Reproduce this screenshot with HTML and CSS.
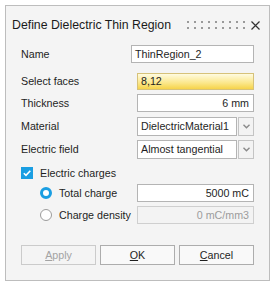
FILE: index.html
```html
<!DOCTYPE html>
<html lang="en">
<head>
  <meta charset="UTF-8" />
  <title>Define Dielectric Thin Region</title>
  <link rel="stylesheet" href="styles.css">
</head>
<body>
  <div class="dialog">
    <div class="header">
      <span class="title">Define Dielectric Thin Region</span>
      <svg class="grip" width="58" height="8" viewBox="0 0 58 8">
        <g fill="#9a9a9a">
          <rect x="0" y="0" width="2" height="2"/><rect x="7" y="0" width="2" height="2"/><rect x="14" y="0" width="2" height="2"/>
          <rect x="21" y="0" width="2" height="2"/><rect x="28" y="0" width="2" height="2"/><rect x="35" y="0" width="2" height="2"/>
          <rect x="42" y="0" width="2" height="2"/><rect x="49" y="0" width="2" height="2"/><rect x="56" y="0" width="2" height="2"/>
          <rect x="0" y="6" width="2" height="2"/><rect x="7" y="6" width="2" height="2"/><rect x="14" y="6" width="2" height="2"/>
          <rect x="21" y="6" width="2" height="2"/><rect x="28" y="6" width="2" height="2"/><rect x="35" y="6" width="2" height="2"/>
          <rect x="42" y="6" width="2" height="2"/><rect x="49" y="6" width="2" height="2"/><rect x="56" y="6" width="2" height="2"/>
        </g>
      </svg>
      <svg class="close" width="9" height="9" viewBox="0 0 9 9">
        <path d="M0.5 0.5 L8.5 8.5 M8.5 0.5 L0.5 8.5" stroke="#333" stroke-width="1.2"/>
      </svg>
    </div>

    <div class="row row-name">
      <span class="label">Name</span>
      <div class="field wide">ThinRegion_2</div>
    </div>
    <div class="row row-faces">
      <span class="label">Select faces</span>
      <div class="field picked">8,12</div>
    </div>
    <div class="row">
      <span class="label">Thickness</span>
      <div class="field right">6 mm</div>
    </div>
    <div class="row row-combo">
      <span class="label">Material</span>
      <div class="combo">
        <div class="combo-text">DielectricMaterial1</div>
        <div class="combo-btn"><svg width="7" height="5" viewBox="0 0 7 5"><path d="M0.5 0.8 L3.5 3.8 L6.5 0.8" fill="none" stroke="#8a8a8a" stroke-width="1.4"/></svg></div>
      </div>
    </div>
    <div class="row row-combo">
      <span class="label">Electric field</span>
      <div class="combo">
        <div class="combo-text">Almost tangential</div>
        <div class="combo-btn"><svg width="7" height="5" viewBox="0 0 7 5"><path d="M0.5 0.8 L3.5 3.8 L6.5 0.8" fill="none" stroke="#8a8a8a" stroke-width="1.4"/></svg></div>
      </div>
    </div>
    <div class="row row-check">
      <span class="checkbox"><svg width="12" height="12" viewBox="0 0 12 12"><path d="M2.8 6.2 L5 8.4 L9.3 3.8" fill="none" stroke="#fff" stroke-width="1.6"/></svg></span>
      <span class="check-label">Electric charges</span>
    </div>
    <div class="row row-radio">
      <span class="radio checked"></span>
      <span class="label">Total charge</span>
      <div class="field right">5000 mC</div>
    </div>
    <div class="row row-radio">
      <span class="radio"></span>
      <span class="label">Charge density</span>
      <div class="field right disabled">0 mC/mm3</div>
    </div>

    <div class="buttons">
      <button class="btn" disabled><u>A</u>pply</button>
      <button class="btn"><u>O</u>K</button>
      <button class="btn"><u>C</u>ancel</button>
    </div>
  </div>
</body>
</html>
```

FILE: styles.css
```css
body {
  margin: 0;
  background: #fff;
  font-family: "Liberation Sans", Arial, sans-serif;
  font-size: 10.7px;
  color: #1e1e1e;
}

.dialog {
  margin: 5px 0 0 5px;
  width: 265px;
  height: 276px;
  box-sizing: border-box;
  border: 1px solid #bdbdbd;
  background: #f4f4f4;
}

.header {
  display: flex;
  align-items: center;
  height: 37px;
  padding: 1px 9px 0 6px;
  box-sizing: border-box;
}

.title {
  font-size: 12.3px;
  color: #1a1a1a;
}

.grip {
  margin-left: auto;
  margin-right: 6px;
}

.row {
  display: flex;
  align-items: center;
  height: 22px;
  padding: 0 15px;
}

.row-faces {
  margin-top: 5px;
}

.row-combo {
  margin-top: 1px;
}

.label {
  flex: 1;
  white-space: nowrap;
}

.field {
  width: 117px;
  height: 18px;
  box-sizing: border-box;
  border: 1px solid #b4b4b4;
  background: #fff;
  padding: 0 3px;
  line-height: 16px;
  white-space: nowrap;
  overflow: hidden;
}

.field.wide {
  width: 123px;
}

.field.picked {
  height: 17px;
  line-height: 15px;
  padding-left: 3px;
  border-color: #d6c27a;
  background: linear-gradient(to bottom, #fffbe0, #fbe78a 60%, #f6d34a);
}

.field.right {
  text-align: right;
  padding-right: 4px;
}

.field.disabled {
  background: #f3f3f3;
  border-color: #cfcfcf;
  color: #9c9c9c;
}

.combo {
  display: flex;
  width: 117px;
  height: 19px;
  gap: 1px;
}

.combo-text {
  flex: 1;
  box-sizing: border-box;
  border: 1px solid #b4b4b4;
  background: #fff;
  padding: 0 3px;
  line-height: 17px;
  white-space: nowrap;
  overflow: hidden;
}

.combo-btn {
  width: 16px;
  box-sizing: border-box;
  border: 1px solid #c4c4c4;
  background: #f3f3f3;
  display: flex;
  align-items: center;
  justify-content: center;
}

.row-check {
  height: 18px;
  margin-top: 4px;
  gap: 7px;
}

.checkbox {
  width: 12px;
  height: 12px;
  background: #1a9ee2;
  display: flex;
}

.row-radio {
  padding-left: 34px;
}

.radio {
  width: 12px;
  height: 12px;
  box-sizing: border-box;
  border-radius: 50%;
  border: 1px solid #9c9c9c;
  background: #fff;
  margin-right: 7px;
}

.radio.checked {
  border: 3.5px solid #1a9ee2;
  background: #fff;
}

.buttons {
  display: flex;
  gap: 4px;
  padding: 0 15px;
  margin-top: 19px;
}

.btn {
  width: 75px;
  height: 20px;
  box-sizing: border-box;
  border: 1px solid #adadad;
  background: #f9f9f9;
  font-family: inherit;
  font-size: 10.7px;
  color: #1e1e1e;
  padding: 0;
}

.btn:disabled {
  border-color: #cbcbcb;
  background: #f4f4f4;
  color: #a3a3a3;
}
```
